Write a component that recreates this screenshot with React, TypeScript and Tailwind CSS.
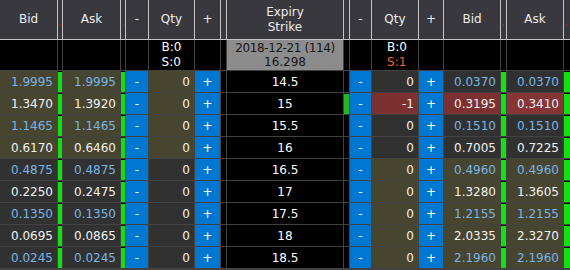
import React from "react";

const COLS =
  "grid grid-cols-[57px_4px_57px_4px_22px_45px_25px_5px_116px_5px_21px_46px_24px_56px_5px_56px_6px]";

type Row = {
  strike: string;
  cb: string;
  ca: string;
  cq: string;
  pq: string;
  pb: string;
  pa: string;
  callItm: boolean;
  putItm: boolean;
  putShort?: boolean;
  mark?: boolean;
};

const rows: Row[] = [
  { strike: "14.5", cb: "1.9995", ca: "1.9995", cq: "0", pq: "0", pb: "0.0370", pa: "0.0370", callItm: true, putItm: false },
  { strike: "15", cb: "1.3470", ca: "1.3920", cq: "0", pq: "-1", pb: "0.3195", pa: "0.3410", callItm: true, putItm: false, putShort: true, mark: true },
  { strike: "15.5", cb: "1.1465", ca: "1.1465", cq: "0", pq: "0", pb: "0.1510", pa: "0.1510", callItm: true, putItm: false },
  { strike: "16", cb: "0.6170", ca: "0.6460", cq: "0", pq: "0", pb: "0.7005", pa: "0.7225", callItm: true, putItm: false },
  { strike: "16.5", cb: "0.4875", ca: "0.4875", cq: "0", pq: "0", pb: "0.4960", pa: "0.4960", callItm: false, putItm: true },
  { strike: "17", cb: "0.2250", ca: "0.2475", cq: "0", pq: "0", pb: "1.3280", pa: "1.3605", callItm: false, putItm: true },
  { strike: "17.5", cb: "0.1350", ca: "0.1350", cq: "0", pq: "0", pb: "1.2155", pa: "1.2155", callItm: false, putItm: true },
  { strike: "18", cb: "0.0695", ca: "0.0865", cq: "0", pq: "0", pb: "2.0335", pa: "2.3270", callItm: false, putItm: true },
  { strike: "18.5", cb: "0.0245", ca: "0.0245", cq: "0", pq: "0", pb: "2.1960", pa: "2.1960", callItm: false, putItm: true },
];

const OLIVE = "bg-[#47442f]";
const DARK = "bg-[#313131]";

function Num({ v, bg, blue }: { v: string; bg: string; blue?: boolean }) {
  return (
    <div
      className={`${bg} h-[21px] flex items-center justify-end pr-1 ${
        blue ? "text-[#78b6e6]" : "text-[#f2f2f2]"
      }`}
    >
      {v}
    </div>
  );
}

function Bar({ on, dark }: { on: boolean; dark?: boolean }) {
  return (
    <div className="h-[21px] bg-black pt-px">
      {on && <div className={`h-[20px] ${dark ? "bg-[#22b822]" : "bg-[#11e011]"}`} />}
    </div>
  );
}

function Btn({ t }: { t: string }) {
  return (
    <div className="h-[21px] bg-[#0078d2] text-white flex items-center justify-center">{t}</div>
  );
}

function HeadCell({ children }: { children?: React.ReactNode }) {
  return (
    <div className="bg-[#38383e] h-[39px] flex items-center justify-center text-center text-[#ececec] leading-[15px]">
      {children}
    </div>
  );
}

function Dot() {
  return (
    <div className="bg-[#38383e] h-[39px] relative">
      <div className="absolute left-[2px] top-[24px] w-px h-[2px] bg-[#8a2a2a]" />
    </div>
  );
}

export default function App() {
  return (
    <div
      className="w-[570px] h-[270px] overflow-hidden bg-[#424242] text-[12px]"
      style={{ fontFamily: '"DejaVu Sans", Verdana, sans-serif' }}
    >
      <div className={`${COLS} gap-x-px bg-[#c4c4c4] pb-px`}>
        <HeadCell>Bid</HeadCell>
        <Dot />
        <HeadCell>Ask</HeadCell>
        <Dot />
        <HeadCell>-</HeadCell>
        <HeadCell>Qty</HeadCell>
        <HeadCell>+</HeadCell>
        <HeadCell />
        <HeadCell>
          Expiry
          <br />
          Strike
        </HeadCell>
        <HeadCell />
        <HeadCell>-</HeadCell>
        <HeadCell>Qty</HeadCell>
        <HeadCell>+</HeadCell>
        <HeadCell>Bid</HeadCell>
        <Dot />
        <HeadCell>Ask</HeadCell>
        <Dot />
      </div>
      <div className={`${COLS} gap-px`}>
        {/* second header row */}
        <div className="h-[30px] bg-black" />
        <div className="h-[30px] bg-black" />
        <div className="h-[30px] bg-black" />
        <div className="h-[30px] bg-black" />
        <div className="h-[30px] bg-black" />
        <div className="h-[30px] bg-black flex justify-center items-center">
          <div className="leading-[15px] text-white text-left">
            <div>B:0</div>
            <div>S:0</div>
          </div>
        </div>
        <div className="h-[30px] bg-black" />
        <div className="h-[30px] bg-black" />
        <div className="h-[30px] bg-[#8c8c8c] flex flex-col items-center justify-center leading-[14px] text-[#151515]">
          <div className="tracking-[-0.4px]">2018-12-21 (114)</div>
          <div>16.298</div>
        </div>
        <div className="h-[30px] bg-black" />
        <div className="h-[30px] bg-black" />
        <div className="h-[30px] bg-black flex justify-center items-center pl-[4px]">
          <div className="leading-[15px] text-left">
            <div className="text-white">B:0</div>
            <div className="text-[#f2643a]">S:1</div>
          </div>
        </div>
        <div className="h-[30px] bg-black" />
        <div className="h-[30px] bg-black" />
        <div className="h-[30px] bg-black" />
        <div className="h-[30px] bg-black" />
        <div className="h-[30px] bg-black" />

        {rows.map((r) => {
          const cbg = r.callItm ? OLIVE : DARK;
          const pbg = r.putShort ? "bg-[#7c3030]" : r.putItm ? OLIVE : DARK;
          const pabg = r.putShort ? "bg-[#863434]" : pbg;
          const cBlue = r.cb === r.ca;
          const pBlue = r.pb === r.pa;
          return (
            <React.Fragment key={r.strike}>
              <Num v={r.cb} bg={cbg} blue={cBlue} />
              <Bar on />
              <Num v={r.ca} bg={cbg} blue={cBlue} />
              <Bar on />
              <Btn t="-" />
              <Num v={r.cq} bg={cbg} />
              <Btn t="+" />
              <div className="h-[21px] bg-black" />
              <div className="h-[21px] bg-black text-white flex items-center justify-center">
                {r.strike}
              </div>
              <Bar on={!!r.mark} dark />
              <Btn t="-" />
              <Num v={r.pq} bg={pbg} />
              <Btn t="+" />
              <Num v={r.pb} bg={pbg} blue={pBlue} />
              <Bar on />
              <Num v={r.pa} bg={pabg} blue={pBlue} />
              <Bar on />
            </React.Fragment>
          );
        })}
      </div>
    </div>
  );
}
